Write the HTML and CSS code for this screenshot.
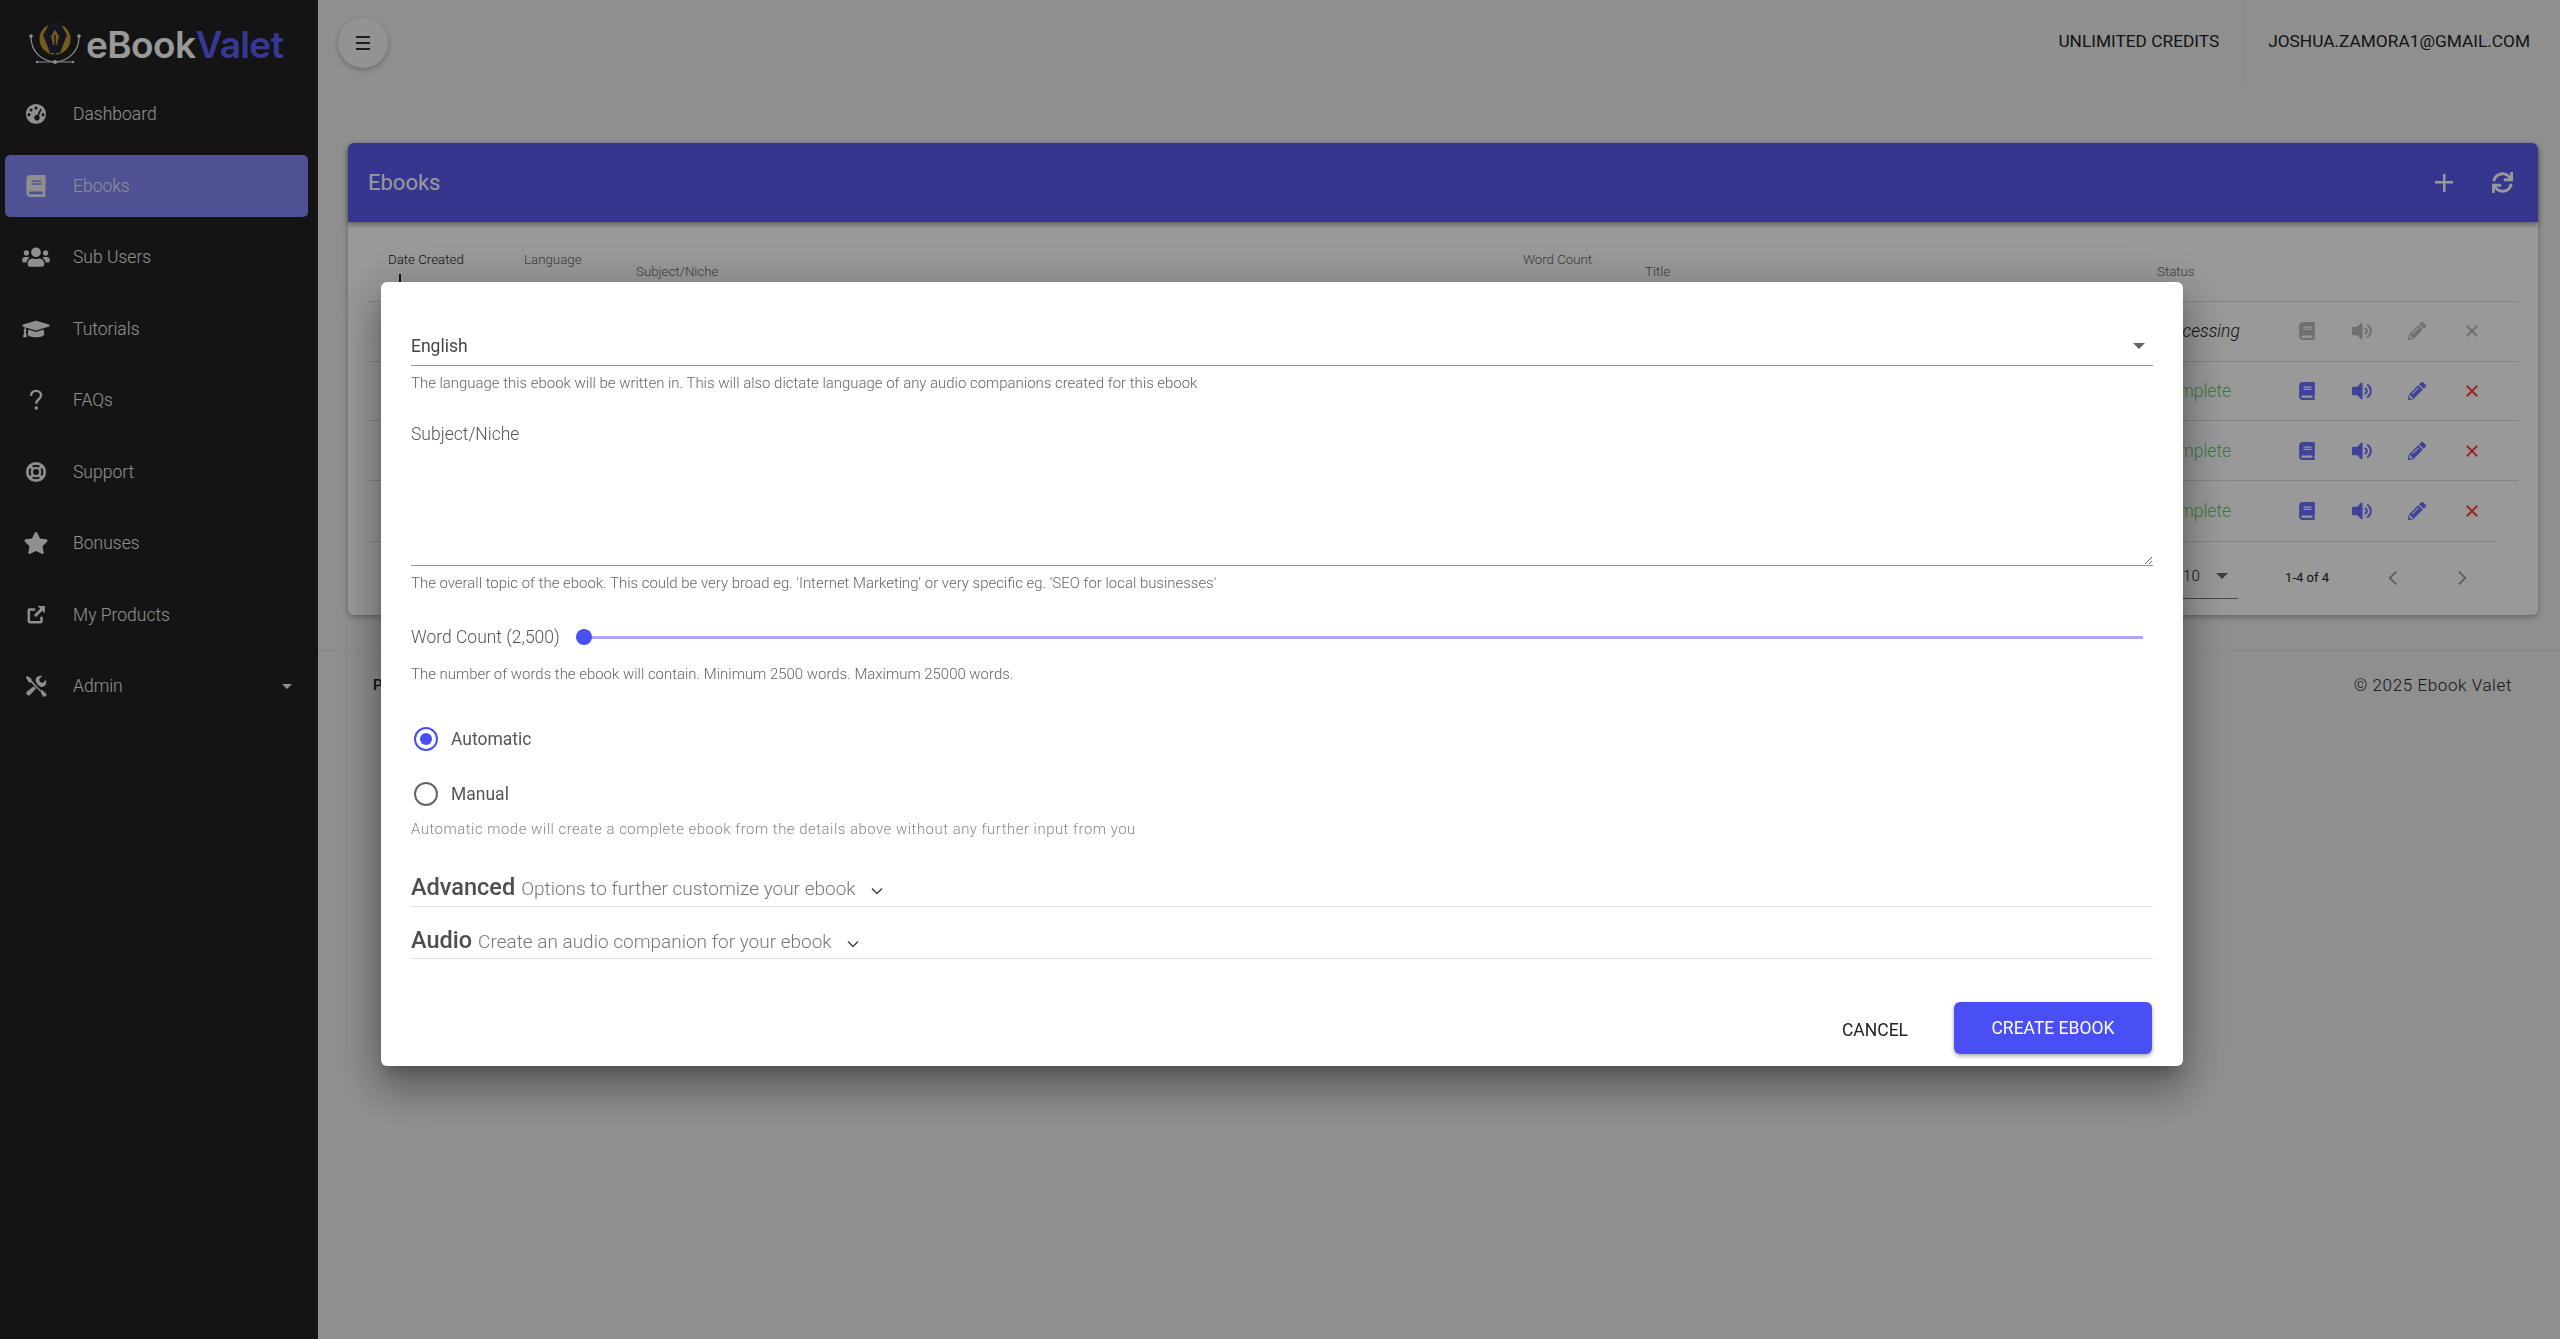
FILE: index.html
```html
<!DOCTYPE html>
<html lang="en">
<head>
    <meta charset="UTF-8">
    <meta name="viewport" content="width=device-width, initial-scale=1.0">
    <title>eBook Valet - Ebooks</title>
    <link rel="stylesheet" href="styles.css">
</head>
<body>
    <svg class="sprite" xmlns="http://www.w3.org/2000/svg">
        <symbol id="i-book" viewBox="0 0 448 512"><path d="M448 360V24c0-13.3-10.7-24-24-24H96C43 0 0 43 0 96v320c0 53 43 96 96 96h328c13.3 0 24-10.7 24-24v-16c0-7.5-3.5-14.3-8.9-18.7-4.2-15.4-4.2-59.3 0-74.7 5.4-4.3 8.9-11.1 8.9-18.6zM128 134c0-3.3 2.7-6 6-6h212c3.3 0 6 2.7 6 6v20c0 3.3-2.7 6-6 6H134c-3.3 0-6-2.7-6-6v-20zm0 64c0-3.3 2.7-6 6-6h212c3.3 0 6 2.7 6 6v20c0 3.3-2.7 6-6 6H134c-3.3 0-6-2.7-6-6v-20zm253.4 250H96c-17.7 0-32-14.3-32-32 0-17.6 14.4-32 32-32h285.4c-1.9 17.1-1.9 46.9 0 64z"/></symbol>
        <symbol id="i-volume" viewBox="0 50 485 412" preserveAspectRatio="none"><path d="M215.03 71.05L126.06 160H24c-13.26 0-24 10.74-24 24v144c0 13.25 10.74 24 24 24h102.06l88.97 88.95c15.03 15.03 40.97 4.47 40.97-16.97V88.02c0-21.46-25.96-31.98-40.97-16.97zM480 256c0-63.53-32.06-121.94-85.77-156.24-11.19-7.14-26.03-3.82-33.12 7.46s-3.78 26.21 7.41 33.36C408.27 165.97 432 209.11 432 256s-23.73 90.03-63.48 115.42c-11.19 7.14-14.5 22.07-7.41 33.36 6.51 10.36 21.12 15.14 33.12 7.46C447.94 377.94 480 319.54 480 256zm-141.77-76.87c-11.58-6.33-26.19-2.16-32.61 9.45-6.39 11.61-2.16 26.2 9.45 32.61C327.98 228.28 336 241.63 336 256c0 14.38-8.02 27.72-20.92 34.81-11.61 6.41-15.84 21-9.45 32.61 6.43 11.66 21.05 15.8 32.61 9.45 28.23-15.55 45.77-45 45.77-76.88s-17.54-61.32-45.78-76.86z"/></symbol>
        <symbol id="i-pencil" viewBox="0 0 512 512"><path d="M497.9 142.1l-46.1 46.1c-4.7 4.7-12.3 4.7-17 0l-111-111c-4.7-4.7-4.7-12.3 0-17l46.1-46.1c18.7-18.7 49.1-18.7 67.9 0l60.1 60.1c18.8 18.7 18.8 49.1 0 67.9zM284.2 99.8L21.6 362.4.4 483.9c-2.9 16.4 11.4 30.6 27.8 27.8l121.5-21.3 262.6-262.6c4.7-4.7 4.7-12.3 0-17l-111-111c-4.8-4.7-12.4-4.7-17.1 0zM124.1 339.9c-5.5-5.5-5.500-14.3 0-19.8l154-154c5.5-5.5 14.3-5.5 19.8 0s5.5 14.3 0 19.8l-154 154c-5.5 5.5-14.3 5.5-19.8 0zM88 424h48v36.3l-64.5 11.3-31.1-31.1L51.7 376H88v48z"/></symbol>
        <symbol id="i-times" viewBox="-3 -3 18 18"><path d="M.8.800l10.400 10.400M11.200.800L.8 11.200" fill="none" stroke="currentColor" stroke-width="2"/></symbol>
        <symbol id="i-sync" viewBox="0 0 512 512"><path d="M440.65 12.57l4 82.77A247.16 247.16 0 0 0 255.83 8C134.73 8 33.91 94.92 12.29 209.82A12 12 0 0 0 24.09 224h49.05a12 12 0 0 0 11.67-9.26 175.91 175.91 0 0 1 317-56.94l-101.46-4.86a12 12 0 0 0-12.57 12v47.41a12 12 0 0 0 12 12H500a12 12 0 0 0 12-12V12a12 12 0 0 0-12-12h-47.37a12 12 0 0 0-11.98 12.57zM255.83 432a175.61 175.61 0 0 1-146-77.8l101.8 4.87a12 12 0 0 0 12.57-12v-47.4a12 12 0 0 0-12-12H12a12 12 0 0 0-12 12V500a12 12 0 0 0 12 12h47.35a12 12 0 0 0 12-12.6l-4.15-82.57A247.17 247.17 0 0 0 255.83 504c121.11 0 221.93-86.92 243.55-201.82a12 12 0 0 0-11.8-14.18h-49.05a12 12 0 0 0-11.67 9.26A175.86 175.86 0 0 1 255.83 432z"/></symbol>
        <symbol id="i-users" viewBox="0 0 640 512"><path d="M96 224c35.3 0 64-28.7 64-64s-28.7-64-64-64-64 28.7-64 64 28.7 64 64 64zm448 0c35.3 0 64-28.7 64-64s-28.7-64-64-64-64 28.7-64 64 28.7 64 64 64zm32 32h-64c-17.6 0-33.5 7.1-45.1 18.6 40.3 22.1 68.9 62 75.1 109.4h66c17.7 0 32-14.3 32-32v-32c0-35.3-28.7-64-64-64zm-256 0c61.9 0 112-50.1 112-112S381.9 32 320 32 208 82.1 208 144s50.1 112 112 112zm76.8 32h-8.3c-20.8 10-43.9 16-68.5 16s-47.6-6-68.5-16h-8.3C179.6 288 128 339.6 128 403.2V432c0 26.5 21.5 48 48 48h288c26.5 0 48-21.5 48-48v-28.8c0-63.6-51.6-115.2-115.2-115.2zm-223.7-13.4C161.5 263.1 145.6 256 128 256H64c-35.3 0-64 28.7-64 64v32c0 17.7 14.3 32 32 32h65.9c6.3-47.4 34.9-87.3 75.2-109.4z"/></symbol>
        <symbol id="i-cap" viewBox="0 0 640 512"><path d="M622.34 153.2L343.4 67.5c-15.2-4.67-31.6-4.67-46.79 0L17.66 153.2c-23.54 7.23-23.54 38.36 0 45.59l48.63 14.94c-10.67 13.19-17.23 29.28-17.88 46.9C38.78 266.15 32 276.11 32 288c0 10.78 5.68 19.85 13.86 25.65L20.33 428.53C18.11 438.52 25.71 448 35.94 448h56.11c10.24 0 17.84-9.48 15.62-19.47L82.14 313.65C90.32 307.85 96 298.78 96 288c0-11.57-6.47-21.25-15.66-26.87.76-15.02 8.44-28.3 20.69-36.72L296.6 284.5c9.06 2.78 26.44 6.25 46.79 0l278.95-85.7c23.55-7.24 23.55-38.36 0-45.6zM352.79 315.09c-28.53 8.76-52.84 3.92-65.59 0l-145.02-44.55L128 384c0 35.35 85.96 64 192 64s192-28.65 192-64l-14.18-113.47-145.03 44.56z"/></symbol>
        <symbol id="i-question" viewBox="0 0 24 24"><path d="M6.500 7.500C6.800 4 9 2 12 2c3.200 0 5.500 2 5.500 5 0 2.200-1.200 3.300-2.800 4.500-1.500 1.100-2.400 2.200-2.400 4.500" fill="none" stroke="currentColor" stroke-width="2.600"/><circle cx="12.300" cy="20.800" r="1.900"/></symbol>
        <symbol id="i-star" viewBox="0 0 576 512"><path d="M259.3 17.8L194 150.2 47.9 171.5c-26.2 3.8-36.7 36.1-17.7 54.6l105.7 103-25 145.5c-4.5 26.3 23.2 46 46.4 33.7L288 439.6l130.7 68.7c23.2 12.2 50.9-7.4 46.4-33.7l-25-145.5 105.7-103c19-18.5 8.5-50.8-17.7-54.6L382 150.2 316.7 17.8c-11.7-23.6-45.6-23.9-57.4 0z"/></symbol>
        <symbol id="i-dash" viewBox="0 0 24 24"><path fill-rule="evenodd" d="M12 1a11 11 0 1 0 0 22 11 11 0 0 0 0-22zM12 3.800a1.700 1.700 0 1 1 0 3.400 1.700 1.700 0 0 1 0-3.400zM6.600 6a1.700 1.700 0 1 1 0 3.400 1.700 1.700 0 0 1 0-3.400zM4.300 11a1.700 1.700 0 1 1 0 3.400 1.700 1.700 0 0 1 0-3.400zM19.700 11a1.700 1.700 0 1 1 0 3.400 1.700 1.700 0 0 1 0-3.400zM16.700 6.200l1.600.8-3.200 6.900a3 3 0 1 1-1.700-.8z"/></symbol>
        <symbol id="i-ring" viewBox="0 0 24 24"><circle cx="12" cy="12" r="9.500" fill="none" stroke="currentColor" stroke-width="3"/><circle cx="12" cy="12" r="4.500" fill="none" stroke="currentColor" stroke-width="2.600"/><path d="M6 6l3 3M18 6l-3 3M6 18l3-3M18 18l-3-3" stroke="currentColor" stroke-width="2.800"/></symbol>
        <symbol id="i-link" viewBox="-1 -1 26 26"><path d="M11 4H4.500A2.500 2.500 0 0 0 2 6.500v13A2.500 2.500 0 0 0 4.500 22h13a2.500 2.500 0 0 0 2.500-2.500V14h-3v5H5V7h6z"/><path d="M14 1.500h8.500V10l-3-3-7.500 7.500-2.500-2.500L17 4.500z"/></symbol>
        <symbol id="i-tools" viewBox="0 0 24 24"><path d="M2.600 1.200L1 2.800l3 5 2.600.4 9.600 9.600.9-.1.500 2.700 2.200 2.700c1 .9 2.400.8 3.100-.1.800-.8.800-2.100 0-2.900l-4.300-3.700-1.800-.1L7.200 6 6.900 4z" /><path d="M22.800 5.300l-3.300 3.300-3.200-.9-.9-3.200L18.700 1c-2.300-.7-4.700 0-6 1.700-1 1.200-1.300 2.700-1 4.200l1.300 2.600 2 2 1.800 1.200c1.700.6 3.700.2 5-1.200 1.300-1.300 1.700-3.300 1-6.200z"/><path d="M9.700 12.300l2.400 2.400-6.300 6.800c-1 1-2.500 1.100-3.600.1-1-1-1-2.500 0-3.500z"/></symbol>
    </svg>

    <div class="app">
        <aside class="sidebar">
            <div class="logo">
                <svg class="logo-mark" viewBox="0 0 56 46">
                    <circle cx="28" cy="17" r="15.500" fill="#c49a2c"/>
                    <path d="M20 1h16l-1 3 5 9-7 18h-10l-7-18 5-9z" fill="#23263a"/>
                    <path d="M28 8l4 6-2 9h-4l-2-9z" fill="#c49a2c"/>
                    <path d="M28 13v22" stroke="#23263a" stroke-width="1.500"/>
                    <path d="M4 15c0 14 10 24 24 25 14-1 24-11 24-25" fill="none" stroke="#eee" stroke-width="1.200"/>
                    <path d="M10 40h36" stroke="#eee" stroke-width="1"/>
                    <circle cx="4" cy="14" r="1.800" fill="#eee"/>
                    <circle cx="52" cy="14" r="1.800" fill="#eee"/>
                    <circle cx="28" cy="40" r="2" fill="#eee"/>
                    <circle cx="10" cy="40" r="1.200" fill="#eee"/>
                    <circle cx="46" cy="40" r="1.200" fill="#eee"/>
                </svg>
                <span class="logo-text">eBook<span class="logo-accent">Valet</span></span>
            </div>
            <nav class="nav">
                <a class="nav-item"><svg class="nav-icon"><use href="#i-dash"/></svg>Dashboard</a>
                <a class="nav-item active"><svg class="nav-icon"><use href="#i-book"/></svg>Ebooks</a>
                <a class="nav-item"><svg class="nav-icon"><use href="#i-users"/></svg>Sub Users</a>
                <a class="nav-item"><svg class="nav-icon"><use href="#i-cap"/></svg>Tutorials</a>
                <a class="nav-item"><svg class="nav-icon"><use href="#i-question"/></svg>FAQs</a>
                <a class="nav-item"><svg class="nav-icon"><use href="#i-ring"/></svg>Support</a>
                <a class="nav-item"><svg class="nav-icon"><use href="#i-star"/></svg>Bonuses</a>
                <a class="nav-item"><svg class="nav-icon"><use href="#i-link"/></svg>My Products</a>
                <a class="nav-item"><svg class="nav-icon"><use href="#i-tools"/></svg>Admin<span class="nav-caret"></span></a>
            </nav>
        </aside>

        <main class="main">
            <header class="topbar">
                <button class="menu-btn"><span></span><span></span><span></span></button>
                <div class="topbar-right">
                    <span class="top-link">Unlimited Credits</span>
                    <span class="top-link top-user">joshua.zamora1@gmail.com</span>
                </div>
            </header>

            <section class="card">
                <div class="card-head">
                    <h2>Ebooks</h2>
                    <div class="card-tools">
                        <span class="plus"></span>
                        <svg class="sync"><use href="#i-sync"/></svg>
                    </div>
                </div>
                <div class="table">
                    <div class="row head-row">
                        <div class="th active-th">Date Created<i class="sort-arrow"></i></div>
                        <div class="th">Language</div>
                        <div class="th th-low">Subject/Niche</div>
                        <div class="th">Word Count</div>
                        <div class="th th-low">Title</div>
                        <div class="th th-low">Status</div>
                    </div>
                    <div class="row body-row">
                        <div class="status processing">Processing</div>
                        <svg class="act muted"><use href="#i-book"/></svg>
                        <svg class="act muted"><use href="#i-volume"/></svg>
                        <svg class="act muted"><use href="#i-pencil"/></svg>
                        <svg class="act muted"><use href="#i-times"/></svg>
                    </div>
                    <div class="row body-row">
                        <div class="status complete">Complete</div>
                        <svg class="act"><use href="#i-book"/></svg>
                        <svg class="act"><use href="#i-volume"/></svg>
                        <svg class="act"><use href="#i-pencil"/></svg>
                        <svg class="act red"><use href="#i-times"/></svg>
                    </div>
                    <div class="row body-row">
                        <div class="status complete">Complete</div>
                        <svg class="act"><use href="#i-book"/></svg>
                        <svg class="act"><use href="#i-volume"/></svg>
                        <svg class="act"><use href="#i-pencil"/></svg>
                        <svg class="act red"><use href="#i-times"/></svg>
                    </div>
                    <div class="row body-row last-row">
                        <div class="status complete">Complete</div>
                        <svg class="act"><use href="#i-book"/></svg>
                        <svg class="act"><use href="#i-volume"/></svg>
                        <svg class="act"><use href="#i-pencil"/></svg>
                        <svg class="act red"><use href="#i-times"/></svg>
                    </div>
                    <div class="pager">
                        <div class="page-size">10<span class="caret dark"></span></div>
                        <span class="page-count">1-4 of 4</span>
                        <svg class="page-arrow" viewBox="0 0 12 20"><path d="M10 2L2 10l8 8"/></svg>
                        <svg class="page-arrow" viewBox="0 0 12 20"><path d="M2 2l8 8-8 8"/></svg>
                    </div>
                </div>
            </section>

            <footer class="footer">
                <span class="footer-left">Privacy</span>
                <span class="footer-right">© 2025 Ebook Valet</span>
            </footer>
        </main>
    </div>

    <div class="backdrop">
        <div class="dialog">
            <div class="select-field">English<span class="caret"></span></div>
            <p class="help">The language this ebook will be written in. This will also dictate language of any audio companions created for this ebook</p>

            <textarea class="text-field" placeholder="Subject/Niche"></textarea>
            <p class="help">The overall topic of the ebook. This could be very broad eg. 'Internet Marketing' or very specific eg. 'SEO for local businesses'</p>

            <div class="word-row">
                <label for="words">Word Count (2,500)</label>
                <input id="words" type="range" min="2500" max="25000" value="2500">
            </div>
            <p class="help">The number of words the ebook will contain. Minimum 2500 words. Maximum 25000 words.</p>

            <div class="radio-row first-radio"><span class="radio checked"></span>Automatic</div>
            <div class="radio-row"><span class="radio"></span>Manual</div>
            <p class="help mode-help">Automatic mode will create a complete ebook from the details above without any further input from you</p>

            <div class="fold fold-first">
                <strong>Advanced</strong><span>Options to further customize your ebook</span>
                <svg class="chev" viewBox="0 0 12 8"><path d="M1 1.500l5 5 5-5"/></svg>
            </div>
            <div class="fold">
                <strong>Audio</strong><span>Create an audio companion for your ebook</span>
                <svg class="chev" viewBox="0 0 12 8"><path d="M1 1.500l5 5 5-5"/></svg>
            </div>

            <div class="actions">
                <button class="btn-text">Cancel</button>
                <button class="btn-primary">Create Ebook</button>
            </div>
        </div>
    </div>
</body>
</html>
```

FILE: styles.css
```css
* {
    box-sizing: border-box;
}
body {
    margin: 0;
    font-family: Roboto, "Liberation Sans", sans-serif;
    color: #222;
    background: #eee;
    overflow: hidden;
}
.sprite {
    display: none;
}
.app {
    display: flex;
    height: 100vh;
}

/* sidebar */
.sidebar {
    width: 318px;
    flex-shrink: 0;
    background: #222;
    color: #eee;
}
.logo {
    display: flex;
    align-items: center;
    height: 83px;
    padding: 6px 0 0 27px;
}
.logo-mark {
    width: 56px;
    height: 46px;
    flex-shrink: 0;
}
.logo-text {
    margin-left: 3px;
    font-family: Inter, sans-serif;
    font-size: 37px;
    font-weight: 600;
    letter-spacing: -0.6px;
    color: #fff;
}
.logo-accent {
    color: #5c5ef5;
}
.nav {
    display: flex;
    flex-direction: column;
    gap: 9.5px;
}
.nav-item {
    display: flex;
    align-items: center;
    height: 62px;
    margin: 0 10px 0 5px;
    padding-left: 17px;
    border-radius: 5px;
    font-size: 17.500px;
    font-weight: 300;
}
.nav-item.active {
    background: #8487f7;
}
.nav-icon {
    width: 28px;
    height: 22px;
    margin-right: 23px;
    fill: currentColor;
    flex-shrink: 0;
}
.nav-caret {
    margin-left: auto;
    margin-right: 16px;
    border: 5px solid transparent;
    border-top-color: #eee;
    border-bottom: 0;
}

/* main area */
.main {
    flex: 1;
    min-width: 0;
    background: #eee;
}
.topbar {
    display: flex;
    align-items: center;
    justify-content: space-between;
    height: 86px;
    padding: 0 30px 0 20px;
}
.menu-btn {
    display: flex;
    flex-direction: column;
    align-items: center;
    justify-content: center;
    gap: 3.500px;
    width: 50px;
    height: 50px;
    border: 0;
    border-radius: 50%;
    background: #f5f5f5;
    box-shadow: 0 2px 5px rgba(0,0,0,0.25);
}
.menu-btn span {
    display: block;
    width: 14px;
    height: 2.500px;
    background: #333;
}
.topbar-right {
    display: flex;
    align-items: center;
    height: 82px;
}
.top-link {
    font-size: 17.300px;
    text-transform: uppercase;
    padding: 0 24px 4px 0;
}
.top-user {
    display: flex;
    align-items: center;
    height: 100%;
    padding: 0 0 4px 24px;
    border-left: 1px solid #ddd;
}
.card {
    margin: 57px 22px 0 30px;
    background: #fff;
    border-radius: 6px;
    box-shadow: 0 2px 6px rgba(0,0,0,0.3);
}
.card-head {
    display: flex;
    align-items: center;
    justify-content: space-between;
    height: 79px;
    padding: 0 25px 0 20px;
    border-radius: 6px 6px 0 0;
    background: #5c5aee;
    box-shadow: 0 3px 5px rgba(0,0,0,0.35);
    color: #fff;
}
.card-head h2 {
    margin: 0;
    font-size: 22px;
    font-weight: 400;
}
.card-tools {
    display: flex;
    align-items: center;
    gap: 39px;
}
.plus {
    width: 18px;
    height: 18px;
    background: linear-gradient(#fff, #fff) center / 100% 2.500px no-repeat,
                linear-gradient(#fff, #fff) center / 2.500px 100% no-repeat;
}
.sync {
    width: 21px;
    height: 21px;
    fill: #fff;
}
.table {
    padding: 0 20px;
}
.row {
    display: grid;
    grid-template-columns: 1789px 122.500px repeat(4, 55px);
    align-items: center;
    border-bottom: 1px solid #ddd;
    height: 59.700px;
    font-weight: 300;
}
.head-row {
    grid-template-columns: 136px 112px 887px 122px 512px 1fr;
    align-items: start;
    height: 80px;
    padding: 30px 0 0 20px;
}
.th {
    font-size: 13.300px;
    line-height: 15px;
    color: #666;
}
.active-th {
    color: #222;
}
.th-low {
    margin-top: 12px;
}
.sort-arrow {
    display: block;
    width: 2px;
    height: 9px;
    margin: 7px 0 0 11px;
    background: #222;
}
.status {
    grid-column: 2;
    font-size: 17.500px;
}
.processing {
    font-style: italic;
    color: #222;
}
.complete {
    color: #66cc6c;
}
.act {
    justify-self: center;
    width: 20px;
    height: 18px;
    fill: #6c6fff;
    color: #6c6fff;
}
.act.muted {
    fill: #bbb;
    color: #bbb;
}
.act.red {
    color: #ff4040;
}
.last-row {
    border-bottom: 0;
}
.pager {
    display: flex;
    align-items: flex-start;
    height: 74px;
    padding: 25px 30px 0 0;
    margin-right: 21px;
    justify-content: flex-end;
    border-top: 1px solid #ddd;
    font-size: 13px;
}
.page-size {
    display: flex;
    align-items: flex-start;
    justify-content: space-between;
    width: 78px;
    height: 32px;
    padding-left: 23px;
    padding-right: 10px;
    border-bottom: 1px solid #777;
    font-size: 15px;
    font-weight: 300;
}
.page-count {
    margin: 3px 59px 0 47px;
}
.page-arrow {
    width: 10px;
    height: 16px;
    margin-top: 3px;
    fill: none;
    stroke: #999;
    stroke-width: 2.200;
}
.page-arrow + .page-arrow {
    margin-left: 59px;
}
.caret {
    border: 6px solid transparent;
    border-top-color: #666;
    border-bottom: 0;
}
.caret.dark {
    margin-top: 6px;
}
.footer {
    display: flex;
    align-items: center;
    justify-content: space-between;
    height: 70px;
    margin-top: 35px;
    padding: 0 48px 0 55px;
    border-top: 1px solid #e2e2e2;
}
.footer-left {
    font-weight: 500;
    font-size: 15px;
}
.footer-right {
    font-size: 17px;
    font-weight: 300;
    letter-spacing: 0.6px;
}

/* the dialog and the dimming behind it */
.backdrop {
    position: fixed;
    inset: 0;
    padding-top: 282px;
    background: rgba(0,0,0,0.4);
}
.dialog {
    width: 1802px;
    height: 784px;
    margin-left: 381px;
    padding: 50px 30px 0;
    background: #fff;
    border-radius: 6px;
    box-shadow: 0 11px 15px -7px rgba(0,0,0,0.25),
                0 24px 38px 3px rgba(0,0,0,0.22),
                0 9px 46px 8px rgba(0,0,0,0.18);
}
.select-field {
    display: flex;
    align-items: center;
    justify-content: space-between;
    height: 34px;
    padding: 0 8px 6px 0;
    border-bottom: 1px solid #949494;
    font-size: 17.500px;
    font-weight: 400;
    color: #444;
}
.help {
    margin: 9px 0 0;
    font-size: 14.950px;
    line-height: 17px;
    font-weight: 300;
    color: #666;
}
.text-field {
    display: block;
    width: 100%;
    height: 149px;
    margin-top: 25px;
    padding: 7px 0 0;
    border: 0;
    border-bottom: 1px solid #949494;
    outline: 0;
    font-family: inherit;
    font-size: 17.500px;
    font-weight: 300;
}
.text-field::placeholder {
    color: #555;
    opacity: 1;
}
.word-row {
    display: flex;
    align-items: center;
    height: 24px;
    margin-top: 33px;
    padding-right: 10px;
    font-size: 17.500px;
    font-weight: 300;
    color: #555;
}
.word-row label {
    width: 165px;
}
.word-row input {
    flex: 1;
    height: 16px;
    margin: 0;
    appearance: none;
    background: transparent;
}
.word-row input::-webkit-slider-runnable-track {
    height: 3px;
    background: #b0a4ff;
}
.word-row input::-webkit-slider-thumb {
    appearance: none;
    width: 16px;
    height: 16px;
    margin-top: -6.500px;
    border-radius: 50%;
    background: #4a4ef5;
}
.word-row + .help {
    margin-top: 17px;
}
.radio-row {
    display: flex;
    align-items: center;
    height: 24px;
    margin-top: 31px;
    padding-left: 3px;
    font-size: 17.500px;
    font-weight: 400;
    color: #555;
}
.first-radio {
    margin-top: 44px;
}
.radio {
    display: flex;
    align-items: center;
    justify-content: center;
    width: 24px;
    height: 24px;
    margin-right: 13px;
    border: 2.500px solid #666;
    border-radius: 50%;
}
.radio.checked {
    border-color: #4a4ef5;
}
.radio.checked::before {
    content: "";
    width: 12px;
    height: 12px;
    border-radius: 50%;
    background: #4a4ef5;
}
.mode-help {
    margin-top: 15px;
    color: #888;
    letter-spacing: 0.5px;
}
.fold {
    display: flex;
    align-items: baseline;
    height: 52px;
    padding-top: 19px;
    border-bottom: 1px solid #e2e2e2;
    font-size: 19px;
    font-weight: 300;
    color: #777;
}
.fold-first {
    margin-top: 35px;
    height: 34px;
    padding-top: 0;
}
.fold strong {
    margin-right: 6px;
    font-size: 23.500px;
    font-weight: 500;
    color: #4d4d4d;
}
.chev {
    width: 12px;
    height: 8px;
    margin-left: 15px;
    fill: none;
    stroke: #444;
    stroke-width: 1.500;
}
.actions {
    display: flex;
    align-items: center;
    justify-content: flex-end;
    gap: 29px;
    margin-top: 43px;
    padding-right: 1px;
}
.actions button {
    font-family: inherit;
    font-size: 17.500px;
    text-transform: uppercase;
    border: 0;
}
.btn-text {
    width: 100px;
    padding: 3px 0 0;
    background: none;
    color: #222;
}
.btn-primary {
    width: 198px;
    height: 52px;
    border-radius: 6px;
    background: #4a4ef5;
    color: #fff;
    box-shadow: 0 2px 4px rgba(0,0,0,0.35);
}
```
